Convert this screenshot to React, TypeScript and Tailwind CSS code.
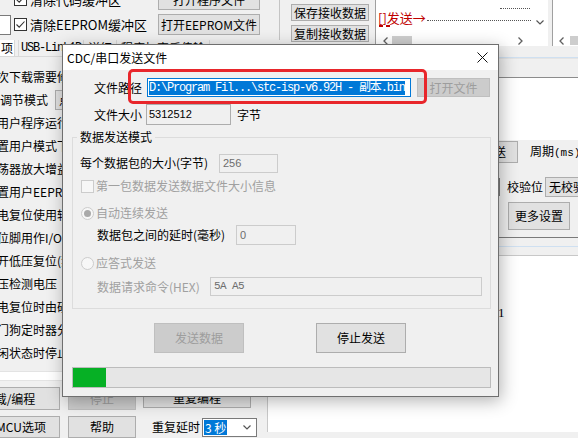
import type { FC, ReactNode } from 'react';

const cjk = 'font-[family-name:"Microsoft_YaHei","Noto_Sans_CJK_SC",sans-serif]';
const mono = 'font-[family-name:"SimSun","Liberation_Mono","Noto_Sans_CJK_SC",monospace]';
const sans = 'font-[family-name:"Liberation_Sans","Noto_Sans_CJK_SC",sans-serif]';

const Button: FC<{ children: ReactNode; className?: string; disabled?: boolean }> = ({
  children,
  className = '',
  disabled = false,
}) => (
  <div
    className={`flex shrink-0 items-center justify-center whitespace-nowrap border text-[12px] leading-none ${
      disabled ? 'border-[#bfbfbf] bg-[#cccccc] text-[#9d9d9d]' : 'border-[#adadad] bg-[#e1e1e1] text-black'
    } ${className}`}
  >
    {children}
  </div>
);

const Check: FC<{ checked?: boolean; disabled?: boolean }> = ({ checked = false, disabled = false }) => (
  <div
    className={`flex h-[13px] w-[13px] shrink-0 items-center justify-center border ${
      disabled ? 'border-[#cccccc] bg-[#f7f7f7]' : 'border-[#333333] bg-white'
    }`}
  >
    {checked && (
      <svg viewBox="0 0 11 11" className="h-[11px] w-[11px]">
        <path d="M1.5 5.5 L4.2 8.2 L9.5 2.5" fill="none" stroke="#333" strokeWidth="1.1" />
      </svg>
    )}
  </div>
);

const Radio: FC<{ checked?: boolean }> = ({ checked = false }) => (
  <div className="flex h-[13px] w-[13px] shrink-0 items-center justify-center rounded-full border border-[#cccccc] bg-[#f7f7f7]">
    {checked && <div className="h-[7px] w-[7px] rounded-full bg-[#a9a9a9]" />}
  </div>
);

const Field: FC<{ children: ReactNode; className?: string }> = ({ children, className = '' }) => (
  <div
    className={`flex shrink-0 items-center border border-[#cccccc] bg-[#f0f0f0] pl-[3px] text-[11px] text-[#6d6d6d] ${className}`}
  >
    {children}
  </div>
);

const ChevronDown: FC = () => (
  <svg viewBox="0 0 8 5" className="h-[5px] w-[8px]">
    <path d="M0.5 0.5 L4 4 L7.5 0.5" fill="none" stroke="#555" strokeWidth="1.2" />
  </svg>
);

const ChevronLeft: FC = () => (
  <svg viewBox="0 0 5 8" className="h-[8px] w-[5px]">
    <path d="M4.5 0.5 L1 4 L4.5 7.5" fill="none" stroke="#606060" strokeWidth="1.3" />
  </svg>
);

const ChevronRight: FC = () => (
  <svg viewBox="0 0 5 8" className="h-[8px] w-[5px]">
    <path d="M0.5 0.5 L4 4 L0.5 7.5" fill="none" stroke="#606060" strokeWidth="1.3" />
  </svg>
);

const listRows = [
  '次下载需要修改的硬件选项',
  '',
  '用户程序运行时的IRC频率',
  '置用户模式下的电压',
  '荡器放大增益(12M以上建议选择)',
  '置用户EEPROM大小',
  '电复位使用较长延时',
  '位脚用作I/O口',
  '开低压复位(禁止低压中断)',
  '压检测电压',
  '电复位时由硬件自动启动看门狗',
  '门狗定时器分频系数',
  '闲状态时停止看门狗计数',
];

const SendFileDialog: FC = () => (
  <div
    className={`absolute left-[62px] top-[44px] flex h-[353px] w-[437px] flex-col border border-[#6f6f6f] bg-[#f0f0f0] text-[12px] leading-none text-black shadow-[2px_4px_16px_rgba(0,0,0,0.3)] ${cjk}`}
  >
    <div className="flex h-[25px] shrink-0 items-center justify-between bg-white pl-[4px] pr-[10px]">
      <span>CDC/串口发送文件</span>
      <svg viewBox="0 0 11 11" className="h-[11px] w-[11px]">
        <path d="M0.5 0.5 L10.5 10.5 M10.5 0.5 L0.5 10.5" stroke="#111" strokeWidth="1" />
      </svg>
    </div>

    <div className="relative flex flex-1 flex-col">
      <div className="mt-[8px] flex h-[19px] items-center">
        <span className="w-[79px] text-right">文件路径</span>
        <div className="ml-[5px] flex h-[19px] w-[264px] items-center border border-[#0078d7] bg-white pl-[1px]">
          <span className={`whitespace-nowrap bg-[#0078d7] text-[12px] leading-[14px] tracking-[-1.2px] text-white ${mono}`}>
            {'D:\\Program Fil...\\stc-isp-v6.92H - 副本.bin'}
          </span>
        </div>
        <Button disabled className="ml-[6px] h-[19px] w-[73px]">
          打开文件
        </Button>
      </div>

      <div className="mt-[7px] flex h-[21px] items-center">
        <span className="w-[79px] text-right">文件大小</span>
        <div className={`ml-[4px] flex h-[21px] w-[85px] items-center border border-[#adadad] bg-[#f0f0f0] pl-[2px] text-[11px] ${sans}`}>
          5312512
        </div>
        <span className="ml-[6px]">字节</span>
      </div>

      <fieldset className="ml-[9px] mt-[4px] w-[419px] border border-[#dcdcdc] pb-[12px] pl-[4px]">
        <legend className="px-[3px] leading-[16px]">数据发送模式</legend>

        <div className="mt-[6px] flex h-[24px] items-center pl-[3px]">
          <span className="w-[139px] whitespace-nowrap">每个数据包的大小(字节)</span>
          <Field className={`h-[19px] w-[59px] ${sans}`}>256</Field>
        </div>

        <div className="flex h-[22px] items-center pl-[4px] text-[#a0a0a0]">
          <Check disabled />
          <span className="ml-[2px]">第一包数据发送数据文件大小信息</span>
        </div>

        <div className="mt-[4px] flex h-[24px] items-center pl-[4px] text-[#a0a0a0]">
          <Radio checked />
          <span className="ml-[2px]">自动连续发送</span>
        </div>

        <div className="flex h-[20px] items-center pl-[20px]">
          <span className="w-[139px] whitespace-nowrap">数据包之间的延时(毫秒)</span>
          <Field className={`h-[20px] w-[60px] ${sans}`}>0</Field>
        </div>

        <div className="mt-[6px] flex h-[24px] items-center pl-[4px] text-[#a0a0a0]">
          <Radio />
          <span className="ml-[2px]">应答式发送</span>
        </div>

        <div className="mt-[2px] flex h-[19px] items-center pl-[20px] text-[#a0a0a0]">
          <span className="w-[113px] whitespace-nowrap">数据请求命令(HEX)</span>
          <Field className={`h-[19px] w-[272px] tracking-[-0.6px] ${mono}`}>5A A5</Field>
        </div>
      </fieldset>

      <div className="mt-[14px] flex h-[30px] pl-[91px]">
        <Button disabled className="h-[30px] w-[90px]">
          发送数据
        </Button>
        <Button className="ml-[72px] h-[30px] w-[90px]">停止发送</Button>
      </div>

      <div className="ml-[9px] mt-[14px] h-[21px] w-[419px] border border-[#bcbcbc] bg-[#e6e6e6]">
        <div className="h-full w-[33px] bg-[#06b025]" />
      </div>

      <div className="absolute -top-[1px] left-[65px] z-10 h-[35px] w-[299px] rounded-[5px] border-[3px] border-[#e8262b]" />
    </div>
  </div>
);

const App: FC = () => (
  <div className={`relative h-[438px] w-[578px] overflow-hidden bg-[#f0f0f0] text-[12px] leading-none text-black ${cjk}`}>
    <div className="flex h-[40px]">
      <div className="flex w-[280px] shrink-0 flex-col gap-[4px] border-r border-[#c4c4c4]">
        <div className="-mt-[11px] flex h-[21px] items-center">
          <div className="ml-[14px]">
            <Check checked />
          </div>
          <span className="ml-[3px] text-[13px]">清除代码缓冲区</span>
          <Button className="ml-auto mr-[19px] h-[21px] w-[102px]">打开程序文件</Button>
        </div>
        <div className="flex h-[21px] items-center">
          <div className="h-[20px] w-[11px] border border-l-0 border-[#7a7a7a] bg-white" />
          <div className="ml-[3px]">
            <Check checked />
          </div>
          <span className="ml-[3px] text-[13px]">清除EEPROM缓冲区</span>
          <Button className="ml-auto mr-[19px] h-[21px] w-[102px]">打开EEPROM文件</Button>
        </div>
      </div>

      <div className="flex shrink-0 flex-col gap-[4px] pl-[11px] pt-[4px]">
        <Button className="h-[17px] w-[78px]">保存接收数据</Button>
        <Button className="h-[17px] w-[78px]">复制接收数据</Button>
      </div>

      <div className="ml-[6px] flex h-[46px] w-[173px] shrink-0 flex-col border-l border-[#a0a0a0] bg-white">
        <div className="flex h-[35px]">
          <div className="flex-1 pl-[2px] pt-[2px]">
            <div className="ml-[122px] h-[7px] w-[30px] border-b border-dotted border-[#555]" />
            <div className="mt-[2px] flex items-end">
              <span className="text-[13px] text-[#c00000]">[]发送→</span>
              <span className="mb-[3px] ml-[1px] flex-1 border-b border-dotted border-[#555]" />
            </div>
            <div className="mt-[1px] flex gap-[3px] pl-[1px]">
              <span className="w-[4px] border-b-2 border-[#c00000]" />
              <span className="w-[4px] border-b-2 border-[#c00000]" />
            </div>
          </div>
          <div className="flex w-[17px] flex-col items-center pt-[20px]">
            <ChevronDown />
          </div>
        </div>
        <div className="flex h-[11px] items-center pl-[7px] pr-[25px]">
          <ChevronLeft />
          <div className="ml-[4px] h-[9px] w-[20px] bg-[#cdcdcd]" />
          <div className="flex-1" />
          <ChevronRight />
        </div>
      </div>

      <div className="ml-[4px] flex h-[46px] flex-1 flex-col border-l border-[#a0a0a0] bg-white">
        <div className="h-[35px]" />
        <div className="flex h-[11px] items-center pl-[6px]">
          <ChevronLeft />
          <div className="ml-[6px] h-[9px] flex-1 bg-[#cdcdcd]" />
        </div>
      </div>
    </div>

    <div className="flex h-[398px]">
      <div className="flex w-[267px] shrink-0 flex-col">
        <div className="flex h-[17px] items-stretch border-b border-[#d9d9d9]">
          <div className="flex w-[15px] items-center justify-end border-r border-[#d9d9d9] bg-white pr-[1px]">项</div>
          <div className={`ml-[3px] flex items-center border-x border-[#d9d9d9] px-[2px] text-[12px] tracking-[-1.2px] ${mono}`}>
            USB-Link1D
          </div>
          <div className="flex items-center border-r border-[#d9d9d9] px-[4px]">详细</div>
          <div className="flex items-center border-r border-[#d9d9d9] px-[4px]">程序加密后传输</div>
        </div>

        <div className="flex h-[317px] flex-col pt-[9px]">
          {listRows.map((row, i) =>
            row ? (
              <div key={i} className="-ml-[3px] flex h-[23px] items-center whitespace-nowrap">
                {row}
              </div>
            ) : (
              <div key={i} className="flex h-[23px] items-center whitespace-nowrap">
                调节模式
                <div className="ml-[7px] flex h-[20px] w-[70px] items-center border border-[#adadad] bg-[#e1e1e1] pl-[3px]">
                  点
                </div>
              </div>
            ),
          )}
        </div>

        <div className="h-[10px] border-y border-[#e3e3e3] bg-white" />

        <div className="mt-[6px] flex h-[23px] items-start">
          <Button className="-ml-[42px] h-[23px] w-[102px]">下载/编程</Button>
          <Button disabled className="ml-[8px] h-[23px] w-[68px]">
            停止
          </Button>
          <Button className="ml-[7px] h-[21px] w-[108px]">重复编程</Button>
        </div>

        <div className="mt-[6px] flex h-[22px] items-center">
          <Button className="-ml-[42px] h-[22px] w-[102px]">检测MCU选项</Button>
          <Button className="ml-[8px] h-[22px] w-[68px]">帮助</Button>
          <span className="ml-[16px]">重复延时</span>
          <div className="ml-[2px] flex h-[19px] w-[55px] items-center border border-[#7a7a7a] bg-white pl-[1px] pr-[5px]">
            <span className="bg-[#0078d7] px-[1px] leading-[15px] text-white">3 秒</span>
            <div className="flex-1" />
            <ChevronDown />
          </div>
        </div>
      </div>

      <div className="flex flex-1 flex-col">
        <div className="h-[17px]" />
        <div className="h-[1px] bg-[#cfe0f1]" />
        <div className="h-[1px] bg-[#e4e4e4]" />
        <div className="h-[18px]" />
        <div className="h-[63px] border-t border-[#8c8c8c] bg-white" />

        <div className="flex h-[97px] flex-col pt-[1px]">
          <div className="flex h-[22px] items-center">
            <Button className="ml-[203px] h-[22px] w-[48px]">发送</Button>
            <span className="ml-[12px] whitespace-nowrap">
              周期<span className={`text-[11px] ${mono}`}>(ms)</span>
            </span>
          </div>
          <div className="mt-[13px] flex h-[21px] items-center">
            <div className="ml-[190px] h-[18px] w-[43px] border-2 border-[#7a7a7a]" />
            <span className="ml-[7px] w-[36px] whitespace-nowrap">校验位</span>
            <div className="ml-[2px] flex h-[20px] w-[60px] items-center border border-[#adadad] bg-[#e1e1e1] pl-[3px]">
              无校验
            </div>
          </div>
          <Button className="ml-[241px] mt-[5px] h-[28px] w-[62px]">更多设置</Button>
        </div>

        <div className="h-[1px] bg-[#7a7a7a]" />
        <div className="h-[8px]" />
        <div className="h-[1px] bg-[#cfe0f1]" />
        <div className="h-[8px]" />
        <div className="flex flex-1 flex-col border-l border-t border-[#c8c8c8] bg-white pl-[230px] pt-[50px]">
          <span className={`text-[13px] leading-[14px] font-[family-name:"Liberation_Serif",serif]`}>1</span>
        </div>
        <div className="h-[6px] bg-[#f0f0f0]" />
      </div>
    </div>

    <SendFileDialog />
  </div>
);

export default App;
